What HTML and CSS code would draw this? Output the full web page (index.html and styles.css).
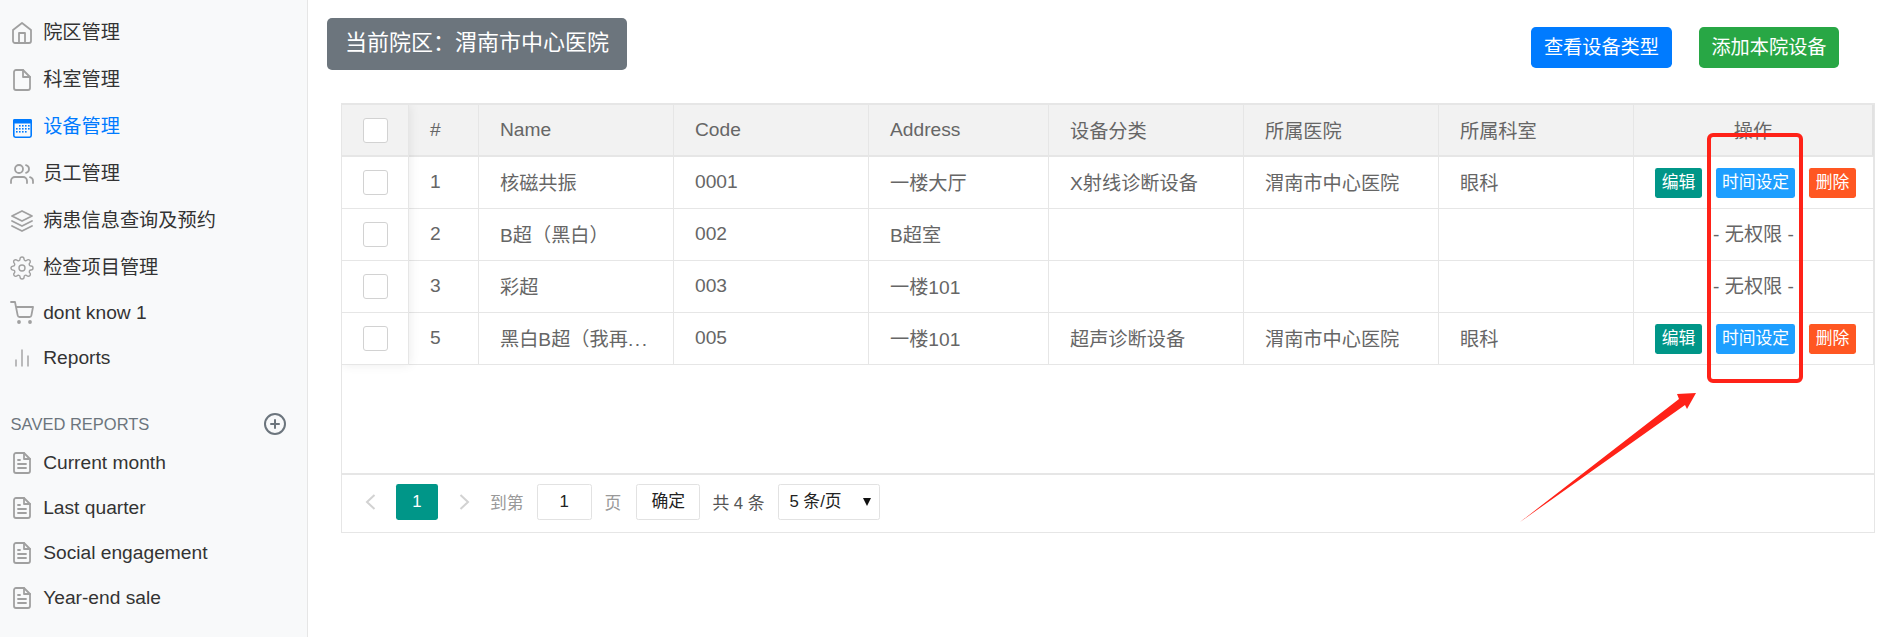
FILE: index.html
```html
<!DOCTYPE html>
<html lang="zh-CN">
<head>
<meta charset="utf-8">
<title>设备管理</title>
<link rel="stylesheet" href="styles.css">
</head>
<body>
<aside class="sidebar">
  <nav class="nav-main">
    <a class="nav-item cjk"><svg class="ico" viewBox="0 0 24 24"><path d="M3 9l9-7 9 7v11a2 2 0 0 1-2 2H5a2 2 0 0 1-2-2z"/><polyline points="9 22 9 12 15 12 15 22"/></svg>院区管理</a>
    <a class="nav-item cjk"><svg class="ico" viewBox="0 0 24 24"><path d="M13 2H6a2 2 0 0 0-2 2v16a2 2 0 0 0 2 2h12a2 2 0 0 0 2-2V9z"/><polyline points="13 2 13 9 20 9"/></svg>科室管理</a>
    <a class="nav-item cjk active"><svg class="ico-cal" viewBox="0 0 24 24"><rect class="cal-box" x="3.8" y="4.8" width="17.4" height="17.4" rx="1.6"/><rect class="cal-top" x="3" y="4" width="19" height="4.4" rx="1.6"/><g class="cal-dots"><rect x="9" y="10" width="1.6" height="1.6"/><rect x="12" y="10" width="1.6" height="1.6"/><rect x="15" y="10" width="1.6" height="1.6"/><rect x="18" y="10" width="1.6" height="1.6"/><rect x="6" y="13" width="1.6" height="1.6"/><rect x="9" y="13" width="1.6" height="1.6"/><rect x="12" y="13" width="1.6" height="1.6"/><rect x="15" y="13" width="1.6" height="1.6"/><rect x="18" y="13" width="1.6" height="1.6"/><rect x="6" y="16" width="1.6" height="1.6"/><rect x="9" y="16" width="1.6" height="1.6"/><rect x="12" y="16" width="1.6" height="1.6"/><rect x="15" y="16" width="1.6" height="1.6"/></g></svg>设备管理</a>
    <a class="nav-item cjk"><svg class="ico" viewBox="0 0 24 24"><path d="M17 21v-2a4 4 0 0 0-4-4H5a4 4 0 0 0-4 4v2"/><circle cx="9" cy="7" r="4"/><path d="M23 21v-2a4 4 0 0 0-3-3.87"/><path d="M16 3.13a4 4 0 0 1 0 7.75"/></svg>员工管理</a>
    <a class="nav-item cjk"><svg class="ico" viewBox="0 0 24 24"><polygon points="12 2 2 7 12 12 22 7 12 2"/><polyline points="2 17 12 22 22 17"/><polyline points="2 12 12 17 22 12"/></svg>病患信息查询及预约</a>
    <a class="nav-item cjk"><svg class="ico thin" viewBox="0 0 24 24"><circle cx="12" cy="12" r="3"/><path d="M19.4 15a1.65 1.65 0 0 0 .33 1.82l.06.06a2 2 0 0 1 0 2.83 2 2 0 0 1-2.83 0l-.06-.06a1.65 1.65 0 0 0-1.82-.33 1.65 1.65 0 0 0-1 1.51V21a2 2 0 0 1-2 2 2 2 0 0 1-2-2v-.09A1.65 1.65 0 0 0 9 19.4a1.65 1.65 0 0 0-1.82.33l-.06.06a2 2 0 0 1-2.83 0 2 2 0 0 1 0-2.83l.06-.06a1.65 1.65 0 0 0 .33-1.82 1.65 1.65 0 0 0-1.51-1H3a2 2 0 0 1-2-2 2 2 0 0 1 2-2h.09A1.65 1.65 0 0 0 4.6 9a1.65 1.65 0 0 0-.33-1.82l-.06-.06a2 2 0 0 1 0-2.83 2 2 0 0 1 2.83 0l.06.06a1.65 1.65 0 0 0 1.82.33H9a1.65 1.65 0 0 0 1-1.51V3a2 2 0 0 1 2-2 2 2 0 0 1 2 2v.09a1.65 1.65 0 0 0 1 1.51 1.65 1.65 0 0 0 1.82-.33l.06-.06a2 2 0 0 1 2.83 0 2 2 0 0 1 0 2.83l-.06.06a1.65 1.65 0 0 0-.33 1.82V9a1.65 1.65 0 0 0 1.51 1H21a2 2 0 0 1 2 2 2 2 0 0 1-2 2h-.09a1.65 1.65 0 0 0-1.51 1z"/></svg>检查项目管理</a>
    <a class="nav-item"><svg class="ico" viewBox="0 0 24 24"><circle cx="9" cy="21" r="1"/><circle cx="20" cy="21" r="1"/><path d="M1 1h4l2.68 13.39a2 2 0 0 0 2 1.61h9.72a2 2 0 0 0 2-1.61L23 6H6"/></svg>dont know 1</a>
    <a class="nav-item"><svg class="ico thin" viewBox="0 0 24 24"><line x1="18" y1="20" x2="18" y2="10"/><line x1="12" y1="20" x2="12" y2="4"/><line x1="6" y1="20" x2="6" y2="14"/></svg>Reports</a>
  </nav>
  <h6 class="saved-head"><span>Saved reports</span><svg class="ico-plus" viewBox="0 0 24 24"><circle cx="12" cy="12" r="10"/><line x1="12" y1="8" x2="12" y2="16"/><line x1="8" y1="12" x2="16" y2="12"/></svg></h6>
  <nav class="nav-saved">
    <a class="nav-item"><svg class="ico" viewBox="0 0 24 24"><path d="M14 2H6a2 2 0 0 0-2 2v16a2 2 0 0 0 2 2h12a2 2 0 0 0 2-2V8z"/><polyline points="14 2 14 8 20 8"/><line x1="16" y1="13" x2="8" y2="13"/><line x1="16" y1="17" x2="8" y2="17"/><polyline points="10 9 9 9 8 9"/></svg>Current month</a>
    <a class="nav-item"><svg class="ico" viewBox="0 0 24 24"><path d="M14 2H6a2 2 0 0 0-2 2v16a2 2 0 0 0 2 2h12a2 2 0 0 0 2-2V8z"/><polyline points="14 2 14 8 20 8"/><line x1="16" y1="13" x2="8" y2="13"/><line x1="16" y1="17" x2="8" y2="17"/><polyline points="10 9 9 9 8 9"/></svg>Last quarter</a>
    <a class="nav-item"><svg class="ico" viewBox="0 0 24 24"><path d="M14 2H6a2 2 0 0 0-2 2v16a2 2 0 0 0 2 2h12a2 2 0 0 0 2-2V8z"/><polyline points="14 2 14 8 20 8"/><line x1="16" y1="13" x2="8" y2="13"/><line x1="16" y1="17" x2="8" y2="17"/><polyline points="10 9 9 9 8 9"/></svg>Social engagement</a>
    <a class="nav-item"><svg class="ico" viewBox="0 0 24 24"><path d="M14 2H6a2 2 0 0 0-2 2v16a2 2 0 0 0 2 2h12a2 2 0 0 0 2-2V8z"/><polyline points="14 2 14 8 20 8"/><line x1="16" y1="13" x2="8" y2="13"/><line x1="16" y1="17" x2="8" y2="17"/><polyline points="10 9 9 9 8 9"/></svg>Year-end sale</a>
  </nav>
</aside>
<main class="main">
  <div class="topbar">
    <div class="campus">当前院区：渭南市中心医院</div>
    <div class="top-actions">
      <button class="btn btn-blue">查看设备类型</button>
      <button class="btn btn-green">添加本院设备</button>
    </div>
  </div>
  <section class="card">
    <div class="table-wrap">
      <table class="grid">
        <colgroup>
          <col class="c-check"><col class="c-num"><col class="c-wide"><col class="c-wide"><col class="c-addr"><col class="c-wide"><col class="c-wide"><col class="c-wide"><col class="c-ops">
        </colgroup>
        <thead>
          <tr>
            <th class="center"><div class="check"></div></th><th>#</th><th>Name</th><th>Code</th><th>Address</th><th>设备分类</th><th>所属医院</th><th>所属科室</th><th class="center">操作</th>
          </tr>
        </thead>
        <tbody>
          <tr>
            <td class="center"><div class="check"></div></td><td>1</td><td>核磁共振</td><td>0001</td><td>一楼大厅</td><td>X射线诊断设备</td><td>渭南市中心医院</td><td>眼科</td>
            <td class="ops"><div class="ops-row"><button class="mini mini-teal">编辑</button><button class="mini mini-blue">时间设定</button><button class="mini mini-orange">删除</button></div></td>
          </tr>
          <tr>
            <td class="center"><div class="check"></div></td><td>2</td><td>B超（黑白）</td><td>002</td><td>B超室</td><td></td><td></td><td></td><td class="center no-perm">- 无权限 -</td>
          </tr>
          <tr>
            <td class="center"><div class="check"></div></td><td>3</td><td>彩超</td><td>003</td><td>一楼101</td><td></td><td></td><td></td><td class="center no-perm">- 无权限 -</td>
          </tr>
          <tr>
            <td class="center"><div class="check"></div></td><td>5</td><td>黑白B超（我再<span class="dots">...</span></td><td>005</td><td>一楼101</td><td>超声诊断设备</td><td>渭南市中心医院</td><td>眼科</td>
            <td class="ops"><div class="ops-row"><button class="mini mini-teal">编辑</button><button class="mini mini-blue">时间设定</button><button class="mini mini-orange">删除</button></div></td>
          </tr>
        </tbody>
      </table>
      <div class="fixed-shadow"></div>
    </div>
    <footer class="pager">
      <svg class="chev chev-prev" viewBox="0 0 11 16"><polyline points="9.5 1 2 8 9.5 15"/></svg>
      <span class="page-cur">1</span>
      <svg class="chev chev-next" viewBox="0 0 11 16"><polyline points="1.5 1 9 8 1.5 15"/></svg>
      <span class="pg-label pg-to">到第</span>
      <span class="pg-box pg-input">1</span>
      <span class="pg-label pg-unit">页</span>
      <span class="pg-box pg-ok">确定</span>
      <span class="pg-total">共 4 条</span>
      <span class="pg-box pg-select"><span>5 条/页</span><svg class="tri" viewBox="0 0 8 8"><polygon points="0 0 8 0 4 8"/></svg></span>
    </footer>
  </section>
</main>
<svg class="annot" viewBox="0 0 1886 637">
  <rect class="annot-box" x="1709" y="135" width="92" height="246" rx="4"/>
  <polygon class="annot-arrow" points="1520 522 1679 399 1677 394 1696 393 1687 409 1685 405"/>
</svg>
</body>
</html>
```
FILE: styles.css
```css
* { box-sizing: border-box; }
html, body { margin: 0; height: 100%; }
body {
  display: flex;
  position: relative;
  height: 637px;
  overflow: hidden;
  background: #fff;
  color: #333;
  font-family: "Liberation Sans", "Noto Sans CJK SC", sans-serif;
  font-size: 19.2px;
}

/* Sidebar */
.sidebar {
  flex: 0 0 308px;
  background: #f8f9fa;
  border-right: 1px solid #e6e6e6;
  padding-top: 8px;
}
.nav-main, .nav-saved { display: flex; flex-direction: column; }
.nav-item {
  display: flex;
  align-items: center;
  height: 45px;
  padding-left: 9.6px;
  color: #333;
  line-height: 26px;
}
.nav-item.cjk { height: 47px; padding-top: 2px; }
.nav-item.active { color: #007bff; }
.ico, .ico-cal {
  flex: 0 0 24px;
  width: 24px;
  height: 24px;
  margin-right: 9.6px;
}
.ico {
  fill: none;
  stroke: #a0a0a0;
  stroke-width: 1.8;
  stroke-linecap: round;
  stroke-linejoin: round;
}
.ico.thin { stroke-width: 1.4; }
.cal-box { fill: #f8f9fa; stroke: #007bff; stroke-width: 1.6; }
.cal-top { fill: #007bff; }
.cal-dots { fill: #007bff; }
.saved-head {
  display: flex;
  align-items: center;
  justify-content: space-between;
  height: 24px;
  margin: 32px 0 4px;
  padding: 0 20px 0 10.6px;
  color: #6c757d;
  font-size: 16.5px;
  font-weight: 400;
  text-transform: uppercase;
}
.ico-plus {
  width: 24px;
  height: 24px;
  fill: none;
  stroke: #6c757d;
  stroke-width: 2;
  stroke-linecap: round;
  stroke-linejoin: round;
}

/* Main */
.main {
  flex: 1;
  min-width: 0;
  padding: 18px 11px 0 19px;
}
.topbar {
  display: flex;
  justify-content: space-between;
  align-items: flex-start;
  padding-right: 36px;
}
.campus {
  width: 300px;
  height: 52px;
  padding-left: 18px;
  border-radius: 5px;
  background: #6c757d;
  color: #fff;
  font-size: 22px;
  line-height: 50px;
  white-space: nowrap;
}
.top-actions {
  display: flex;
  gap: 27px;
  margin-top: 9px;
}
.btn {
  height: 41px;
  padding: 0 13px;
  border: 0;
  border-radius: 4.8px;
  color: #fff;
  font: inherit;
  font-size: 19.2px;
  line-height: 41px;
}
.btn-blue { background: #007bff; }
.btn-green { width: 140px; background: #28a745; padding: 0; }

/* Table card */
.card {
  margin: 33px 0 0 14px;
  width: 1534px;
  height: 430px;
  border: 1px solid #e6e6e6;
  border-top-width: 2px;
}
.table-wrap {
  position: relative;
  height: 368px;
  overflow: hidden;
}
.grid {
  width: 1532px;
  table-layout: fixed;
  border-collapse: separate;
  border-spacing: 0;
  color: #666;
}
.c-check { width: 67px; }
.c-num { width: 70px; }
.c-wide { width: 195px; }
.c-addr { width: 180px; }
.c-ops { width: 240px; }
.grid th, .grid td {
  height: 52px;
  padding: 0 0 2px 21px;
  border-right: 1px solid #e6e6e6;
  border-bottom: 1px solid #e6e6e6;
  font-weight: 400;
  text-align: left;
  vertical-align: middle;
  white-space: nowrap;
  overflow: hidden;
}
.grid th {
  padding-bottom: 0;
  background: #f2f2f2;
  border-bottom-width: 2px;
}
.grid th:last-child { border-right: 2px solid #e2e2e2; }
.grid .center { padding: 0; text-align: center; }
.grid .no-perm { padding-bottom: 3px; }
.grid .ops { padding: 0 0 0 21px; }
.dots { letter-spacing: 1.6px; }
.ops-row {
  display: flex;
  gap: 14px;
  margin-top: 1px;
}
.check {
  width: 25px;
  height: 25px;
  margin: 0 auto;
  background: #fff;
  border: 1px solid #d2d2d2;
  border-radius: 3px;
}
.mini {
  height: 30px;
  padding: 0;
  border: 0;
  border-radius: 2.4px;
  color: #fff;
  font: inherit;
  font-size: 16.8px;
  line-height: 30px;
}
.mini-teal { width: 47px; background: #009688; }
.mini-blue { width: 79px; background: #1e9fff; }
.mini-orange { width: 47px; background: #ff5722; }
.fixed-shadow {
  position: absolute;
  top: 0;
  left: 0;
  width: 67px;
  height: 260px;
  box-shadow: 1px 0 10px rgba(0, 0, 0, 0.08);
  pointer-events: none;
}

/* Pagination */
.pager {
  display: flex;
  align-items: center;
  height: 58px;
  padding: 0 0 3px 0;
  border-top: 2px solid #e6e6e6;
  font-size: 16.8px;
}
.chev {
  width: 11px;
  height: 16px;
  fill: none;
  stroke: #d2d2d2;
  stroke-width: 2;
}
.chev-prev { margin-left: 23px; }
.chev-next { margin-left: 21px; }
.page-cur {
  width: 42px;
  height: 36px;
  margin-left: 20px;
  border-radius: 2.4px;
  background: #009688;
  color: #fff;
  line-height: 36px;
  text-align: center;
}
.pg-label { color: #999; }
.pg-to { margin-left: 20px; }
.pg-unit { margin-left: 13px; }
.pg-box {
  height: 36px;
  border: 1px solid #e2e2e2;
  border-radius: 2.4px;
  background: #fff;
  color: #222;
  line-height: 34px;
  text-align: center;
}
.pg-input { width: 55px; margin-left: 13px; }
.pg-ok { width: 64px; margin-left: 15px; }
.pg-total { width: 52px; margin-left: 12px; color: #555; white-space: nowrap; }
.pg-select {
  display: flex;
  align-items: center;
  justify-content: space-between;
  width: 102px;
  margin-left: 14px;
  padding: 0 8px 0 10px;
  white-space: nowrap;
}
.tri { width: 8px; height: 8px; fill: #111; }

/* Red annotation drawn over the screenshot */
.annot {
  position: absolute;
  left: 0;
  top: 0;
  width: 1886px;
  height: 637px;
  pointer-events: none;
}
.annot-box { fill: none; stroke: #ff2218; stroke-width: 4; }
.annot-arrow { fill: #ff2218; }
```
